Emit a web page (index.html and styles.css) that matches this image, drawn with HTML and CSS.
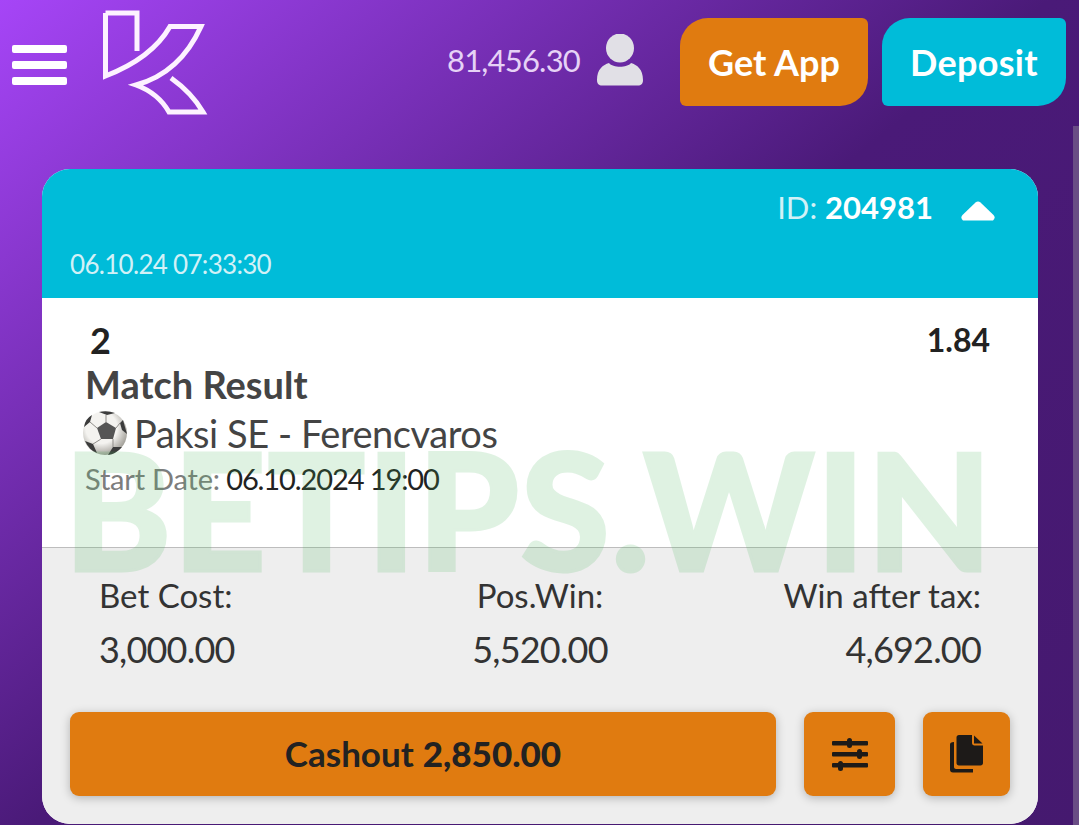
FILE: index.html
```html
<!DOCTYPE html>
<html lang="en">
  <head>
    <meta charset="UTF-8" />
    <title>Bet details</title>
    <link rel="stylesheet" href="styles.css">
  </head>
  <body>
    <header class="top-bar">
      <button class="menu-button" aria-label="Menu">
        <span></span>
        <span></span>
        <span></span>
      </button>
      <svg class="logo" viewBox="0 0 110 110" fill="none" stroke="#fdf2ff" stroke-width="5">
        <path d="M3.5 5H35V43M3.5 5V68Q50 50 68 18.500H99Q78 65 34 77Q56 85 67 104H101Q90 85 69 70" />
      </svg>
      <div class="balance">
        <span>81,456.30</span>
        <svg class="user-icon" viewBox="0 0 46 52" fill="#e1e0e6">
          <ellipse cx="23" cy="14" rx="14" ry="14.500" />
          <path d="M0 46C0 35 6 31 12 29C16 34 30 34 34 29C40 31 46 35 46 46C46 50 44 51.500 41 51.500H5C2 51.500 0 50 0 46Z" />
        </svg>
      </div>
      <button class="head-button get-app">Get App</button>
      <button class="head-button deposit">Deposit</button>
    </header>

    <div class="scroll-thumb"></div>

    <main class="content">
      <section class="bet-card">
        <div class="bet-head">
          <div class="bet-id">
            <span>ID: <b>204981</b></span>
            <svg class="chevron" viewBox="0 0 34 20" fill="#fff">
              <path d="M14.500 1.500Q17 -0.500 19.500 1.500L32.500 14Q35 17 32 19.500H2Q-1 17 1.500 14Z" />
            </svg>
          </div>
          <div class="bet-date">06.10.24 07:33:30</div>
        </div>

        <div class="bet-body">
          <div class="pick-row">
            <span class="pick">2</span>
            <span class="odds">1.84</span>
          </div>
          <div class="market">Match Result</div>
          <div class="match">
            <svg class="ball" viewBox="0 0 46 46">
              <defs>
                <radialGradient id="ball-shade" cx="42%" cy="38%" r="65%">
                  <stop offset="0.55" stop-color="#f4f3f0" />
                  <stop offset="1" stop-color="#9c9992" />
                </radialGradient>
              </defs>
              <circle cx="23" cy="23" r="22" fill="url(#ball-shade)" />
              <path d="M24 12L34 18L31 29H19L15 18Z" fill="#555" />
              <path d="M17 2L25 5L33 3Q25 0 17 2ZM41 10L45 24L40 20L38 13ZM2 17L8 12L10 5Q3 9 2 17ZM3 31L11 34L15 43Q7 40 3 31ZM26 45L31 37L40 37Q34 44 26 45Z" fill="#3c3c3c" />
              <path d="M24 12V5M34 18L38 13M31 29L31 37M19 29L11 34M15 18L8 12" stroke="#8f8d89" stroke-width="1" />
            </svg>
            <span>Paksi SE - Ferencvaros</span>
          </div>
          <div class="start-date"><span>Start Date:</span> 06.10.2024 19:00</div>
        </div>

        <div class="bet-foot">
          <div class="stats">
            <div class="stat">
              <span class="stat-label">Bet Cost:</span>
              <span class="stat-value">3,000.00</span>
            </div>
            <div class="stat stat-mid">
              <span class="stat-label">Pos.Win:</span>
              <span class="stat-value">5,520.00</span>
            </div>
            <div class="stat stat-end">
              <span class="stat-label">Win after tax:</span>
              <span class="stat-value">4,692.00</span>
            </div>
          </div>
          <div class="actions">
            <button class="action cashout">Cashout <b>2,850.00</b></button>
            <button class="action icon-action filters" aria-label="Filters">
              <svg width="38" height="34" viewBox="0 0 38 34" fill="#1d1a18">
                <rect x="1" y="4" width="36" height="4.500" rx="1" />
                <rect x="1" y="15" width="36" height="4.500" rx="1" />
                <rect x="1" y="26" width="36" height="4.500" rx="1" />
                <rect x="16" y="1" width="5" height="10" rx="2.500" />
                <rect x="26" y="12" width="5" height="10" rx="2.500" />
                <rect x="7" y="24" width="5" height="10" rx="2.500" />
              </svg>
            </button>
            <button class="action icon-action copy" aria-label="Copy">
              <svg width="33" height="38" viewBox="0 0 33 38" fill="#1d1a18">
                <path d="M9 0H22V8C22 9.500 23 10.500 24.500 10.500H33V28C33 29.500 32 30.500 30.500 30.500H9C7.500 30.500 6.500 29.500 6.500 28V2.500C6.500 1 7.500 0 9 0Z" />
                <path d="M24 0.500L32.500 8.500H24Z" />
                <path d="M4 7V32C4 33 5 34 6 34H23V37.500H3C1 37.500 0 36.500 0 34.500V9.500C0 8 1 7 4 7Z" />
              </svg>
            </button>
          </div>
        </div>

        <div class="watermark">BETIPS.WIN</div>
      </section>
    </main>
  </body>
</html>
```

FILE: styles.css
```css
*,
*::before,
*::after {
  box-sizing: border-box;
}
html,
body {
  height: 825px;
  overflow: hidden;
}
body {
  margin: 0;
  position: relative;
  font-family: Lato, "Open Sans", sans-serif;
  color: #222;
  background: linear-gradient(141deg, #a645f7 0, #4a1a78 50%, #45196f 100%);
}
button {
  border: 0;
  padding: 0;
  cursor: pointer;
  font-family: inherit;
}

.top-bar {
  display: flex;
  align-items: flex-start;
  height: 169px;
  padding: 18px 13px 0 12px;
}
.menu-button {
  display: flex;
  flex-direction: column;
  gap: 8px;
  width: 55px;
  margin-top: 27px;
  background: transparent;
}
.menu-button span {
  height: 8px;
  border-radius: 2px;
  background: #fff;
}
.logo {
  width: 110px;
  height: 110px;
  margin: -10px 0 0 35px;
}
.balance {
  display: flex;
  align-items: center;
  gap: 17px;
  margin: 16px 37px 0 auto;
  font-size: 31px;
  letter-spacing: -0.8px;
  color: #e6d2f6;
}
.user-icon {
  width: 46px;
  height: 52px;
}
.head-button {
  height: 88px;
  font-size: 36px;
  font-weight: 700;
  color: #fff;
  border-radius: 28px 6px 28px 6px;
}
.get-app {
  width: 188px;
  margin-right: 14px;
  background: #e07b10;
}
.deposit {
  width: 184px;
  letter-spacing: 0.3px;
  background: #00bcd9;
}

.scroll-thumb {
  position: absolute;
  top: 126px;
  right: 0;
  bottom: 0;
  width: 6px;
  background: #6a4d85;
}

.content {
  padding: 0 41px 0 42px;
}
.bet-card {
  position: relative;
  height: 655px;
  overflow: hidden;
  border-radius: 28px;
  background: #fff;
}
.bet-head {
  height: 129px;
  padding: 19px 43px 0 28px;
  background: #00bcd9;
  color: #d2f1f7;
}
.bet-id {
  display: flex;
  justify-content: flex-end;
  align-items: center;
  gap: 28px;
  font-size: 31px;
}
.bet-id b {
  color: #fff;
}
.chevron {
  width: 34px;
  height: 20px;
  margin-top: 7px;
}
.bet-date {
  margin-top: 22px;
  font-size: 26px;
  letter-spacing: -0.7px;
}

.bet-body {
  height: 250px;
  padding: 20px 48px 0 43px;
  border-bottom: 1px solid #bdbdbd;
}
.pick-row {
  display: flex;
  justify-content: space-between;
  align-items: flex-start;
  height: 44px;
}
.pick {
  margin-left: 5px;
  font-size: 36px;
  font-weight: 700;
}
.odds {
  margin-top: 2px;
  font-size: 32px;
  font-weight: 700;
}
.market {
  font-size: 38px;
  line-height: 44px;
  font-weight: 700;
  color: #444;
}
.match {
  display: flex;
  align-items: center;
  gap: 6px;
  margin: 4px 0 0 -3px;
  font-size: 38px;
  letter-spacing: -0.45px;
  color: #444;
}
.ball {
  width: 46px;
  height: 46px;
}
.start-date {
  margin-top: 5px;
  font-size: 29px;
  letter-spacing: -1.1px;
}
.start-date span {
  color: #7d7d7d;
  letter-spacing: -0.2px;
}

.bet-foot {
  height: 276px;
  padding: 27px 28px 0;
  background: #eee;
}
.stats {
  display: grid;
  grid-template-columns: 1fr auto 1fr;
  padding: 0 29px;
}
.stat {
  display: flex;
  flex-direction: column;
  gap: 12px;
}
.stat-mid {
  align-items: center;
}
.stat-end {
  align-items: flex-end;
}
.stat-label {
  font-size: 33px;
  color: #333;
}
.stat-value {
  font-size: 36px;
  letter-spacing: -0.8px;
  color: #333;
}
.actions {
  display: flex;
  gap: 28px;
  margin-top: 41px;
}
.action {
  display: flex;
  align-items: center;
  justify-content: center;
  height: 84px;
  border-radius: 9px;
  background: #e07b10;
  color: #222;
  box-shadow: 0 2px 10px rgba(0, 0, 0, 0.25);
}
.cashout {
  flex: 1;
  gap: 9px;
  padding-bottom: 3px;
  font-size: 35px;
  font-weight: 700;
}
.filters {
  width: 91px;
}
.copy {
  width: 87px;
}

.watermark {
  position: absolute;
  top: 259px;
  left: 22px;
  font-size: 162px;
  line-height: 1;
  font-weight: 900;
  letter-spacing: 1.500px;
  white-space: nowrap;
  color: rgb(70, 180, 90);
  -webkit-text-stroke: 3px rgb(70, 180, 90);
  opacity: 0.17;
}
```
